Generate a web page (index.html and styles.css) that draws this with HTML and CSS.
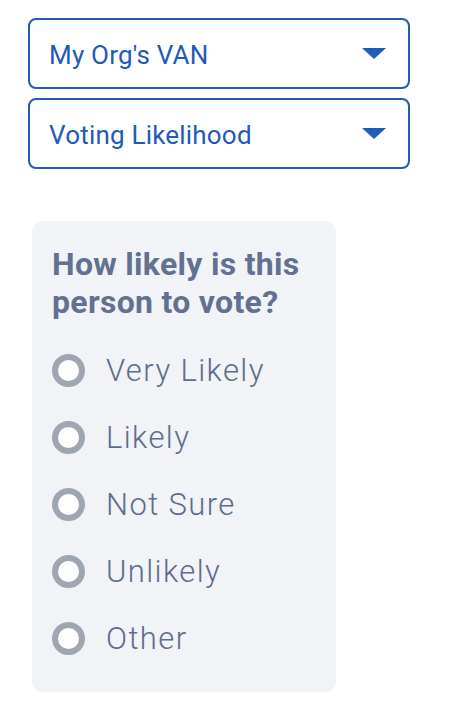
FILE: index.html
```html
<!DOCTYPE html>
<html lang="en">
<head>
    <meta charset="UTF-8">
    <meta name="viewport" content="width=device-width, initial-scale=1.0">
    <title>Voting Likelihood</title>
    <link rel="stylesheet" href="styles.css">
</head>
<body>
    <div class="container">
        <div class="select">
            <span class="select-text">My Org's VAN</span>
            <span class="caret"></span>
        </div>
        <div class="select">
            <span class="select-text">Voting Likelihood</span>
            <span class="caret"></span>
        </div>

        <div class="card">
            <h2>How likely is this person to vote?</h2>
            <div class="options">
                <label class="option"><span class="radio"></span>Very Likely</label>
                <label class="option"><span class="radio"></span>Likely</label>
                <label class="option"><span class="radio"></span>Not Sure</label>
                <label class="option"><span class="radio"></span>Unlikely</label>
                <label class="option"><span class="radio"></span>Other</label>
            </div>
        </div>
    </div>
</body>
</html>
```

FILE: styles.css
```css
body {
    font-family: Roboto, "Liberation Sans", sans-serif;
    margin: 0;
    padding: 0;
    background-color: #ffffff;
}

.container {
    padding: 18px 40px 0 28px;
    display: flex;
    flex-direction: column;
    gap: 9px;
}

.select {
    width: 382px;
    height: 71px;
    box-sizing: border-box;
    border: 2px solid #1f5ab8;
    border-radius: 8px;
    display: flex;
    align-items: center;
    justify-content: space-between;
    padding: 0 22px 0 19px;
}

.select-text {
    color: #1f5ab8;
    font-size: 26px;
    letter-spacing: 0.2px;
    padding-top: 3px;
}

.caret {
    width: 0;
    height: 0;
    border-left: 12px solid transparent;
    border-right: 12px solid transparent;
    border-top: 11px solid #1f5ab8;
}

.card {
    margin: 43px 0 0 4px;
    width: 304px;
    height: 471px;
    box-sizing: border-box;
    background-color: #f1f3f7;
    border-radius: 10px;
    padding: 24px 10px 0 20px;
}

h2 {
    margin: 0;
    font-size: 32px;
    line-height: 38px;
    font-weight: 700;
    color: #637191;
    letter-spacing: 0.3px;
}

.options {
    display: flex;
    flex-direction: column;
    margin-top: 16px;
}

.option {
    display: flex;
    align-items: center;
    gap: 21px;
    height: 67px;
    font-size: 31px;
    color: #5e6d8c;
    font-weight: 300;
    letter-spacing: 1.4px;
}

.radio {
    width: 21px;
    height: 21px;
    border: 6px solid #9fa6b2;
    border-radius: 50%;
    background-color: #ffffff;
}
```
